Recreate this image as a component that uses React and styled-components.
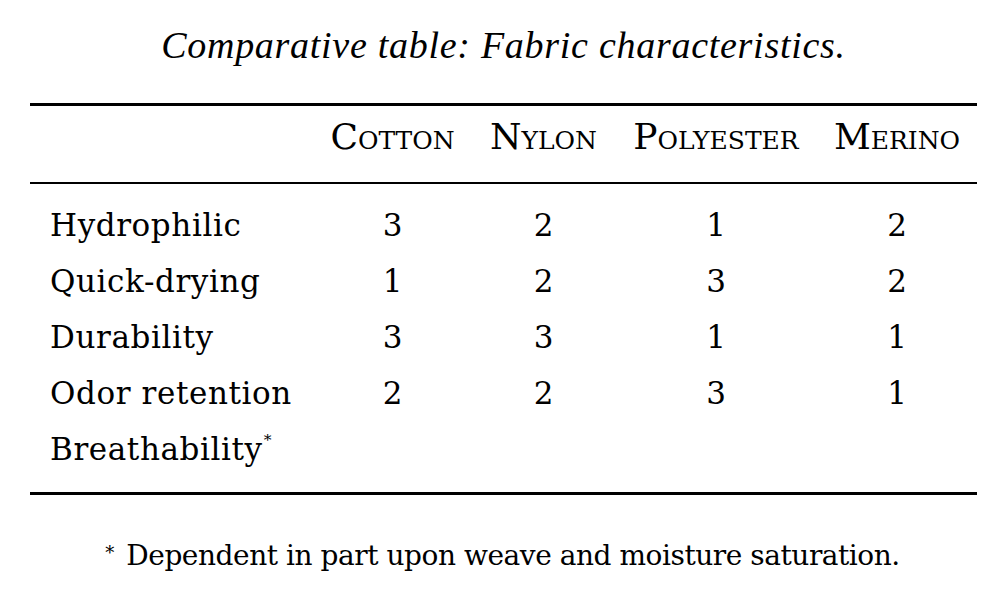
import styled, {createGlobalStyle} from "styled-components"

const GlobalStyle = createGlobalStyle`
	html, body {
		margin: 0;
		padding: 0;
		background: #fff;
		color: #000;
	}
`

const columns = "283px 159px 143px 202px 160px"

const Page = styled.div`
	width: 947px;
	margin-left: 30px;
	font-family: "DejaVu Serif", serif;
`

const Caption = styled.div`
	padding-top: 25px;
	font-family: "Liberation Serif", serif;
	font-style: italic;
	font-size: 38px;
	line-height: 40px;
	letter-spacing: 0.72px;
	text-align: center;
`

const Frame = styled.div`
	margin-top: 38px;
	border-top: 3px solid #000;
	border-bottom: 3px solid #000;
`

const Head = styled.div`
	display: grid;
	grid-template-columns: ${columns};
	padding: 9px 0 23px;
	border-bottom: 2px solid #000;
`

const HeadCell = styled.div`
	font-size: 36px;
	line-height: 44px;
	font-variant: small-caps;
	text-align: center;
`

const Body = styled.div`
	display: grid;
	grid-template-columns: ${columns};
	padding: 13px 0 15px;
`

const Cell = styled.div`
	font-size: 31px;
	line-height: 56px;
	letter-spacing: ${(p) => (p.$label ? "0.6px" : "0")};
	text-align: ${(p) => (p.$label ? "left" : "center")};
	padding-left: ${(p) => (p.$label ? "20px" : "0")};
	white-space: nowrap;
`

const Star = styled.sup`
	font-size: 0.5em;
	vertical-align: 1em;
	line-height: 0;
	margin-left: 1px;
`

const Footnote = styled.div`
	margin-top: 41px;
	font-size: 28px;
	line-height: 40px;
	letter-spacing: -0.45px;
	text-align: center;
	padding-right: 2px;
`

const NoteStar = styled.sup`
	font-size: 0.65em;
	vertical-align: 0.35em;
	line-height: 0;
	margin-right: 4px;
`

const fabrics = ["Cotton", "Nylon", "Polyester", "Merino"]

const rows = [
	{label: "Hydrophilic", values: [3, 2, 1, 2]},
	{label: "Quick-drying", values: [1, 2, 3, 2]},
	{label: "Durability", values: [3, 3, 1, 1]},
	{label: "Odor retention", values: [2, 2, 3, 1]},
	{label: "Breathability", star: true, values: ["", "", "", ""]},
]

export default function App() {
	return (
		<>
			<GlobalStyle />
			<Page>
				<Caption>Comparative table: Fabric characteristics.</Caption>
				<Frame>
					<Head>
						<HeadCell />
						{fabrics.map((f) => (
							<HeadCell key={f}>{f}</HeadCell>
						))}
					</Head>
					<Body>
						{rows.map((row) => [
							<Cell $label key={row.label}>
								{row.label}
								{row.star && <Star>*</Star>}
							</Cell>,
							...row.values.map((v, i) => <Cell key={row.label + i}>{v}</Cell>),
						])}
					</Body>
				</Frame>
				<Footnote>
					<NoteStar>*</NoteStar> Dependent in part upon weave and moisture saturation.
				</Footnote>
			</Page>
		</>
	)
}
